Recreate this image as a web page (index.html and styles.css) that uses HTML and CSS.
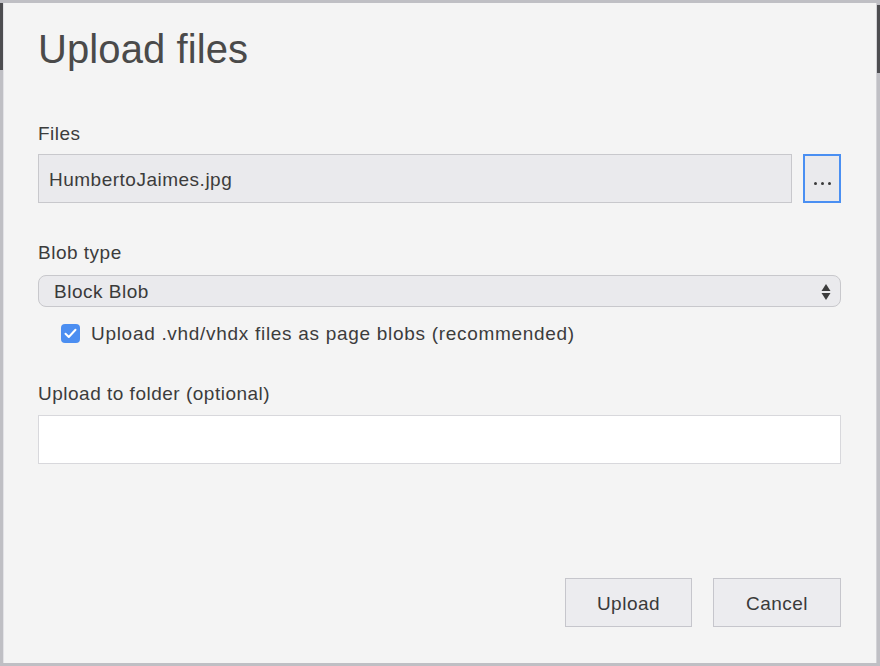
FILE: index.html
```html
<!DOCTYPE html>
<html>
<head>
<meta charset="utf-8">
<title>Upload files</title>
<link rel="stylesheet" href="styles.css">
</head>
<body>
<div class="dialog">
  <h1 class="title">Upload files</h1>

  <div class="label label-files">Files</div>
  <div class="file-row">
    <div class="file-input">HumbertoJaimes.jpg</div>
    <button class="browse"><span class="dot"></span><span class="dot"></span><span class="dot"></span></button>
  </div>

  <div class="label label-blob">Blob type</div>
  <div class="select">
    <span>Block Blob</span>
    <svg class="arrows" width="10" height="18" viewBox="0 0 10 18">
      <path d="M5 1 L9.5 8 L0.5 8 Z" fill="#3c3c3c"/>
      <path d="M0.5 10 L9.5 10 L5 17 Z" fill="#3c3c3c"/>
    </svg>
  </div>

  <div class="check-row">
    <span class="checkbox">
      <svg width="13" height="11" viewBox="0 0 13 11">
        <path d="M1.5 5.8 L4.8 9 L11.5 1.8" fill="none" stroke="#fff" stroke-width="2" stroke-linecap="round" stroke-linejoin="round"/>
      </svg>
    </span>
    <span class="check-label">Upload .vhd/vhdx files as page blobs (recommended)</span>
  </div>

  <div class="label label-folder">Upload to folder (optional)</div>
  <div class="folder-input"></div>

  <div class="actions">
    <button class="btn btn-upload">Upload</button>
    <button class="btn btn-cancel">Cancel</button>
  </div>
</div>
</body>
</html>
```

FILE: styles.css
```css
html, body {
  margin: 0;
  padding: 0;
}
body {
  width: 880px;
  height: 666px;
  box-sizing: border-box;
  padding: 3px;
  background:
    linear-gradient(#4d4d50, #4d4d50) left 0 top 3px / 3px 67px no-repeat,
    linear-gradient(#4d4d50, #4d4d50) right 0 top 5px / 3px 68px no-repeat,
    #bfbfc4;
  font-family: "Liberation Sans", Arial, sans-serif;
  color: #3a3a3a;
  overflow: hidden;
}
.dialog {
  height: 660px;
  box-sizing: border-box;
  background: #f4f4f4;
  border-left: 1px solid #e2e2e6;
  border-right: 1px solid #d2d2d6;
  padding: 22px 35px 0 34px;
}
.title {
  margin: 0;
  font-size: 40px;
  line-height: 48px;
  font-weight: normal;
  color: #4a4a4a;
  letter-spacing: 0.1px;
}
.label {
  font-size: 19px;
  line-height: 22px;
  letter-spacing: 0.5px;
  color: #3c3c3c;
}
.label-files { margin-top: 50px; }
.label-blob { margin-top: 39px; }
.label-folder { margin-top: 39px; }

.file-row {
  margin-top: 9px;
  display: flex;
  gap: 11px;
  height: 49px;
}
.file-input {
  flex: 1;
  box-sizing: border-box;
  height: 49px;
  background: #eaeaed;
  border: 1px solid #c8c8cc;
  display: flex;
  align-items: center;
  padding: 2px 0 0 10px;
  font-size: 19px;
  letter-spacing: 0.5px;
  color: #3c3c3c;
}
.browse {
  width: 38px;
  height: 49px;
  box-sizing: border-box;
  border: 2px solid #4a8ff2;
  background: #eaeaed;
  padding: 9px 0 0 0;
  margin: 0;
  display: flex;
  align-items: center;
  justify-content: center;
  gap: 4px;
}
.dot {
  width: 3px;
  height: 3px;
  border-radius: 50%;
  background: #3a3a3a;
}
.select {
  margin-top: 11px;
  height: 32px;
  box-sizing: border-box;
  border: 1px solid #c8c8cc;
  border-radius: 8px;
  background: #eaeaed;
  display: flex;
  align-items: center;
  justify-content: space-between;
  padding: 1px 9px 0 15px;
  font-size: 19px;
  letter-spacing: 0.5px;
  color: #3a3a3a;
}
.arrows {
  display: block;
}
.check-row {
  margin-top: 15px;
  height: 22px;
  display: flex;
  align-items: center;
  padding-left: 23px;
}
.checkbox {
  width: 19px;
  height: 19px;
  border-radius: 4px;
  background: #4b8ef1;
  display: flex;
  align-items: center;
  justify-content: center;
  margin-right: 11px;
}
.checkbox svg { display: block; }
.check-label {
  font-size: 19px;
  line-height: 22px;
  letter-spacing: 0.7px;
  color: #3c3c3c;
  padding-top: 2px;
}
.folder-input {
  margin-top: 10px;
  height: 49px;
  box-sizing: border-box;
  background: #fff;
  border: 1px solid #d8d8dc;
}
.actions {
  margin-top: 114px;
  display: flex;
  justify-content: flex-end;
  gap: 21px;
}
.btn {
  height: 49px;
  box-sizing: border-box;
  border: 1px solid #c6c6cc;
  background: #ececef;
  font-family: "Liberation Sans", Arial, sans-serif;
  font-size: 19px;
  letter-spacing: 0.5px;
  color: #3a3a3a;
  padding: 3px 0 0 0;
  margin: 0;
}
.btn-upload { width: 127px; }
.btn-cancel { width: 128px; }
```
